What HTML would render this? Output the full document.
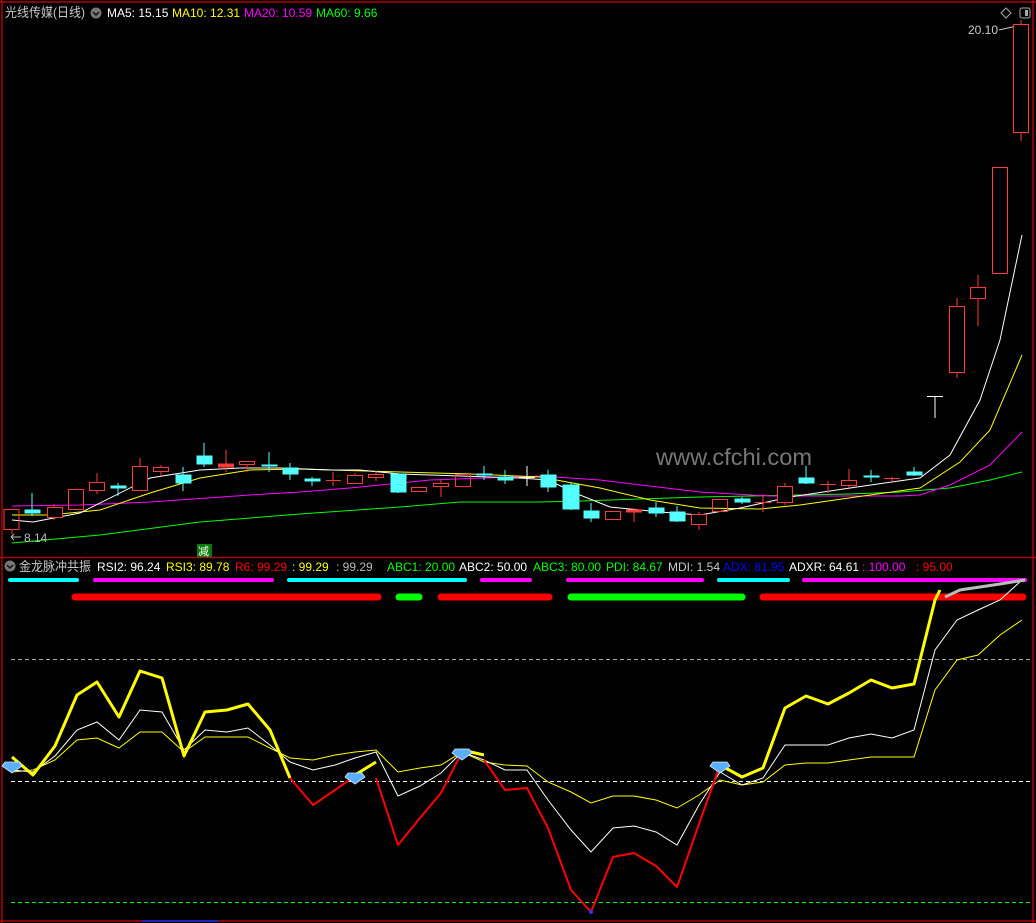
<!DOCTYPE html>
<html><head><meta charset="utf-8"><style>
html,body{margin:0;padding:0;background:#000;width:1036px;height:923px;overflow:hidden}
svg{display:block}
text{font-family:"Liberation Sans","Noto Sans CJK SC",sans-serif;font-size:12px}
</style></head><body>
<svg width="1036" height="923" viewBox="0 0 1036 923">
<rect width="1036" height="923" fill="#000"/>
<g stroke="#b00000" stroke-width="1.5" fill="none">
<line x1="0" y1="2" x2="1036" y2="2"/>
<line x1="2" y1="0" x2="2" y2="923"/>
<line x1="1033" y1="0" x2="1033" y2="923"/>
<line x1="0" y1="557.5" x2="1036" y2="557.5"/>
<line x1="0" y1="921" x2="1036" y2="921"/>
</g>
<line x1="142" y1="921" x2="218" y2="921" stroke="#2020c0" stroke-width="2"/>
<text x="5" y="17" fill="#c8c8c8" textLength="80" lengthAdjust="spacingAndGlyphs" style="font-size:13px">光线传媒(日线)</text>
<circle cx="96" cy="13" r="5.5" fill="#777"/><path d="M93 12l3 3 3-3" stroke="#111" stroke-width="1.5" fill="none"/>
<text x="107" y="17" fill="#fff">MA5: 15.15</text>
<text x="172" y="17" fill="#ff0">MA10: 12.31</text>
<text x="244" y="17" fill="#f0f">MA20: 10.59</text>
<text x="316" y="17" fill="#0f0">MA60: 9.66</text>
<path d="M1006 8l5 5-5 5-5-5z" stroke="#aaa" fill="none"/>
<rect x="1020" y="8" width="10" height="10" rx="2" stroke="#aaa" fill="none"/><rect x="1025" y="10" width="3" height="6" fill="#aaa"/>
<text x="968" y="34" fill="#ccc">20.10</text><line x1="999" y1="30" x2="1017" y2="26" stroke="#ccc"/>
<text x="656" y="465" fill="#777" textLength="156" lengthAdjust="spacingAndGlyphs" style="font-size:23px">www.cfchi.com</text>
<polyline fill="none" stroke="#0f0" stroke-width="1" points="12,543 100,535 200,522 300,514 400,507 460,502 540,502 580,501 700,497 850,494 900,492 950,488 990,480 1022,472"/>
<polyline fill="none" stroke="#f0f" stroke-width="1" points="12,506 80,505 150,502 250,495 300,492 350,488 400,483 430,480 540,476 600,480 700,492 770,496 830,496 900,496 920,495 950,485 990,465 1022,432"/>
<polyline fill="none" stroke="#ff0" stroke-width="1" points="12,515 50,515 100,510 150,493 200,478 250,470 300,469 400,472 470,474 540,477 600,488 650,500 700,508 760,509 800,505 870,495 920,488 960,462 990,430 1022,355"/>
<polyline fill="none" stroke="#fff" stroke-width="1" points="12,520 33,522 80,513 150,478 200,470 240,468 280,468 330,470 360,470 400,474 520,478 548,480 580,495 610,507 660,512 700,515 740,508 790,497 850,488 920,478 950,455 980,400 1000,340 1022,235"/>
<g stroke="#ff3b3b" fill="none" stroke-width="1">
<rect x="4" y="509.5" width="15" height="20"/><line x1="12" y1="530" x2="12" y2="534"/>
<line x1="54" y1="504" x2="54" y2="520"/><rect x="47.5" y="507.5" width="15" height="10" fill="#000"/>
<rect x="68.5" y="489.5" width="15" height="20"/>
<line x1="97" y1="473" x2="97" y2="494"/><rect x="89.5" y="482.5" width="15" height="8" fill="#000"/>
<line x1="140" y1="458" x2="140" y2="491"/><rect x="132.5" y="466.5" width="15" height="24" fill="#000"/>
<line x1="161" y1="465" x2="161" y2="476"/><rect x="153.5" y="467.5" width="15" height="4" fill="#000"/>
<line x1="226" y1="450" x2="226" y2="472"/><rect x="218.5" y="464" width="15" height="3" fill="#ff3b3b"/>
<line x1="247" y1="461" x2="247" y2="472"/><rect x="239.5" y="461.5" width="15" height="3" fill="#000"/>
<line x1="333" y1="472" x2="333" y2="486"/><line x1="326" y1="480.5" x2="341" y2="480.5"/>
<line x1="355" y1="473" x2="355" y2="484"/><rect x="347.5" y="475.5" width="15" height="8" fill="#000"/>
<line x1="376" y1="471" x2="376" y2="481"/><rect x="368.5" y="474.5" width="15" height="3" fill="#000"/>
<rect x="411.5" y="487.5" width="15" height="4"/>
<line x1="441" y1="480" x2="441" y2="497"/><rect x="433.5" y="483.5" width="15" height="3" fill="#000"/>
<rect x="455.5" y="474.5" width="15" height="12"/>
<rect x="605.5" y="511.5" width="15" height="8"/>
<line x1="634" y1="508" x2="634" y2="522"/><rect x="626.5" y="510" width="15" height="2" fill="#ff3b3b"/>
<line x1="699" y1="512" x2="699" y2="530"/><rect x="691.5" y="514.5" width="15" height="10" fill="#000"/>
<rect x="712.5" y="499.5" width="15" height="12"/>
<line x1="763" y1="494" x2="763" y2="512"/><line x1="755" y1="502.5" x2="771" y2="502.5"/>
<line x1="785" y1="483" x2="785" y2="505"/><rect x="777.5" y="486.5" width="15" height="16" fill="#000"/>
<line x1="828" y1="481" x2="828" y2="493"/><line x1="820" y1="484.5" x2="836" y2="484.5"/>
<line x1="849" y1="469" x2="849" y2="488"/><rect x="841.5" y="480.5" width="15" height="5" fill="#000"/>
<line x1="892" y1="477" x2="892" y2="483"/><line x1="884" y1="478.5" x2="900" y2="478.5"/>
<line x1="957" y1="298" x2="957" y2="378"/><rect x="949.5" y="306.5" width="15" height="66" fill="#000"/>
<line x1="978" y1="275" x2="978" y2="326"/><rect x="970.5" y="287.5" width="15" height="11" fill="#000"/>
<rect x="992.5" y="167.5" width="15" height="106"/>
<line x1="1021" y1="20" x2="1021" y2="141"/><rect x="1013.5" y="24.5" width="15" height="108" fill="#000"/>
</g>
<g stroke="#54ffff" fill="#54ffff" stroke-width="1">
<line x1="32" y1="493" x2="32" y2="516"/><rect x="25" y="510" width="15" height="3"/>
<line x1="118" y1="483" x2="118" y2="496"/><rect x="111" y="486" width="15" height="2"/>
<line x1="183" y1="467" x2="183" y2="491"/><rect x="176" y="475" width="15" height="8"/>
<line x1="204" y1="443" x2="204" y2="467"/><rect x="197" y="456" width="15" height="8"/>
<line x1="269" y1="452" x2="269" y2="472"/><rect x="262" y="465" width="15" height="1"/>
<line x1="290" y1="463" x2="290" y2="480"/><rect x="283" y="468" width="15" height="6"/>
<line x1="312" y1="477" x2="312" y2="486"/><rect x="305" y="479" width="15" height="2"/>
<line x1="398" y1="473" x2="398" y2="493"/><rect x="391" y="474" width="15" height="18"/>
<line x1="484" y1="466" x2="484" y2="480"/><rect x="477" y="474" width="15" height="1"/>
<line x1="505" y1="470" x2="505" y2="484"/><rect x="498" y="477" width="15" height="3"/>
<line x1="548" y1="470" x2="548" y2="492"/><rect x="541" y="475" width="15" height="12"/>
<line x1="571" y1="482" x2="571" y2="510"/><rect x="563" y="485" width="16" height="24"/>
<line x1="591" y1="503" x2="591" y2="522"/><rect x="584" y="511" width="15" height="7"/>
<line x1="656" y1="502" x2="656" y2="517"/><rect x="649" y="508" width="15" height="5"/>
<line x1="677" y1="506" x2="677" y2="522"/><rect x="670" y="512" width="15" height="9"/>
<line x1="742" y1="497" x2="742" y2="504"/><rect x="735" y="499" width="15" height="3"/>
<line x1="806" y1="466" x2="806" y2="484"/><rect x="799" y="478" width="15" height="5"/>
<line x1="871" y1="470" x2="871" y2="482"/><rect x="864" y="476" width="15" height="1"/>
<line x1="914" y1="467" x2="914" y2="476"/><rect x="907" y="472" width="15" height="3"/>
</g>
<g stroke="#fff" stroke-width="1"><line x1="527" y1="466" x2="527" y2="486"/><line x1="519" y1="477.5" x2="535" y2="477.5"/>
<line x1="935" y1="396" x2="935" y2="418"/><line x1="927" y1="396.5" x2="943" y2="396.5"/></g>
<path d="M11 537h10M11 537l3-3M11 537l3 3" stroke="#bbb" fill="none"/>
<text x="24" y="542" fill="#bbb">8.14</text>
<rect x="197" y="544" width="15" height="13" fill="#0a7a0a"/><text x="198" y="555" fill="#fff" style="font-size:11px">减</text>
<circle cx="10" cy="566" r="5.5" fill="#777"/><path d="M7 565l3 3 3-3" stroke="#111" stroke-width="1.5" fill="none"/>
<text x="19" y="571" fill="#c8c8c8" textLength="72" lengthAdjust="spacingAndGlyphs" style="font-size:13px">金龙脉冲共振</text>
<text x="97" y="571" fill="#fff">RSI2: 96.24</text>
<text x="166" y="571" fill="#ff0">RSI3: 89.78</text>
<text x="235" y="571" fill="#f00">R6: 99.29</text>
<text x="292" y="571" fill="#ff0">: 99.29</text>
<text x="336" y="571" fill="#bbb">: 99.29</text>
<text x="387" y="571" fill="#0f0">ABC1: 20.00</text>
<text x="459" y="571" fill="#fff">ABC2: 50.00</text>
<text x="533" y="571" fill="#0f0">ABC3: 80.00</text>
<text x="606" y="571" fill="#0f0">PDI: 84.67</text>
<text x="668" y="571" fill="#ccc">MDI: 1.54</text>
<text x="723" y="571" fill="#00f">ADX: 81.95</text>
<text x="789" y="571" fill="#fff">ADXR: 64.61</text>
<text x="862" y="571" fill="#f0f">: 100.00</text>
<text x="916" y="571" fill="#f00">: 95.00</text>
<g stroke-width="4" stroke-linecap="round">
<line x1="10" y1="580" x2="77" y2="580" stroke="#0ff"/>
<line x1="95" y1="580" x2="272" y2="580" stroke="#f0f"/>
<line x1="289" y1="580" x2="465" y2="580" stroke="#0ff"/>
<line x1="482" y1="580" x2="530" y2="580" stroke="#f0f"/>
<line x1="568" y1="580" x2="702" y2="580" stroke="#f0f"/>
<line x1="719" y1="580" x2="788" y2="580" stroke="#0ff"/>
<line x1="804" y1="580" x2="1025" y2="580" stroke="#f0f"/>
</g>
<g stroke-width="7" stroke-linecap="round">
<line x1="75" y1="597" x2="378" y2="597" stroke="#f00"/>
<line x1="399" y1="597" x2="419" y2="597" stroke="#0f0"/>
<line x1="441" y1="597" x2="549" y2="597" stroke="#f00"/>
<line x1="571" y1="597" x2="742" y2="597" stroke="#0f0"/>
<line x1="763" y1="597" x2="1023" y2="597" stroke="#f00"/>
</g>
<g stroke-width="1" stroke-dasharray="4,3">
<line x1="11" y1="659.5" x2="1030" y2="659.5" stroke="#aaa"/>
<line x1="11" y1="781.5" x2="1030" y2="781.5" stroke="#fff"/>
<line x1="11" y1="902.5" x2="1030" y2="902.5" stroke="#0f0"/>
</g>
<polyline fill="none" stroke="#ff0" stroke-width="1" points="12,772 33,770 55,760 77,740 97,738 119,748 140,732 162,732 184,752 205,737 227,737 248,737 270,748 290,758 313,760 335,755 355,752 376,750 398,772 420,768 441,765 462,752 484,762 505,765 527,766 548,782 571,792 591,803 613,796 634,796 656,800 677,808 699,795 720,780 742,785 763,782 785,765 806,763 828,763 849,760 871,757 892,757 914,757 935,690 957,660 978,655 1000,635 1022,620"/>
<polyline fill="none" stroke="#fff" stroke-width="1" points="12,770 33,772 55,756 77,730 97,722 119,740 140,710 162,712 184,750 205,730 227,732 248,728 270,745 290,762 313,770 335,765 355,758 376,752 398,796 420,786 441,773 462,752 484,760 505,770 527,770 548,800 571,830 591,852 613,828 634,826 656,832 677,845 699,805 720,772 742,785 763,778 785,745 806,745 828,745 849,738 871,734 892,738 914,730 935,650 957,620 978,610 1000,600 1022,580"/>
<polyline fill="none" stroke="#bbb" stroke-width="3" points="945,597 960,590 1000,584 1025,580"/>
<g fill="none" stroke-width="3" stroke-linejoin="round">
<polyline stroke="#ff0" points="12,757 33,775 55,746 77,695 97,682 119,717 140,671 162,678 184,756 205,712 227,710 248,704 270,730 290,778"/>
<polyline stroke="#ff0" points="355,775 376,762"/>
<polyline stroke="#ff0" points="462,750 484,755"/>
<polyline stroke="#ff0" points="720,765 742,777 763,768 785,708 806,696 828,704 849,693 871,680 892,688 914,684 935,600 940,590"/>
</g>
<g fill="none" stroke="#f00" stroke-width="2" stroke-linejoin="round">
<polyline points="290,778 313,805 335,790 355,776"/>
<polyline points="376,778 398,845 420,818 441,793 462,752"/>
<polyline points="484,760 505,790 527,788 548,828 571,890 591,912 613,857 634,853 656,866 677,887 699,824 720,765"/>
</g>
<circle cx="591" cy="912" r="2" fill="#33f"/>
<g fill="#5ab0ff" stroke="#cfe8ff" stroke-width="0.8">
<path d="M5 762h14l3 4-10 7-10-7z"/><path d="M348 773h14l3 4-10 7-10-7z"/>
<path d="M455 749h14l3 4-10 7-10-7z"/><path d="M713 762h14l3 4-10 7-10-7z"/>
</g>
</svg>
</body></html>
